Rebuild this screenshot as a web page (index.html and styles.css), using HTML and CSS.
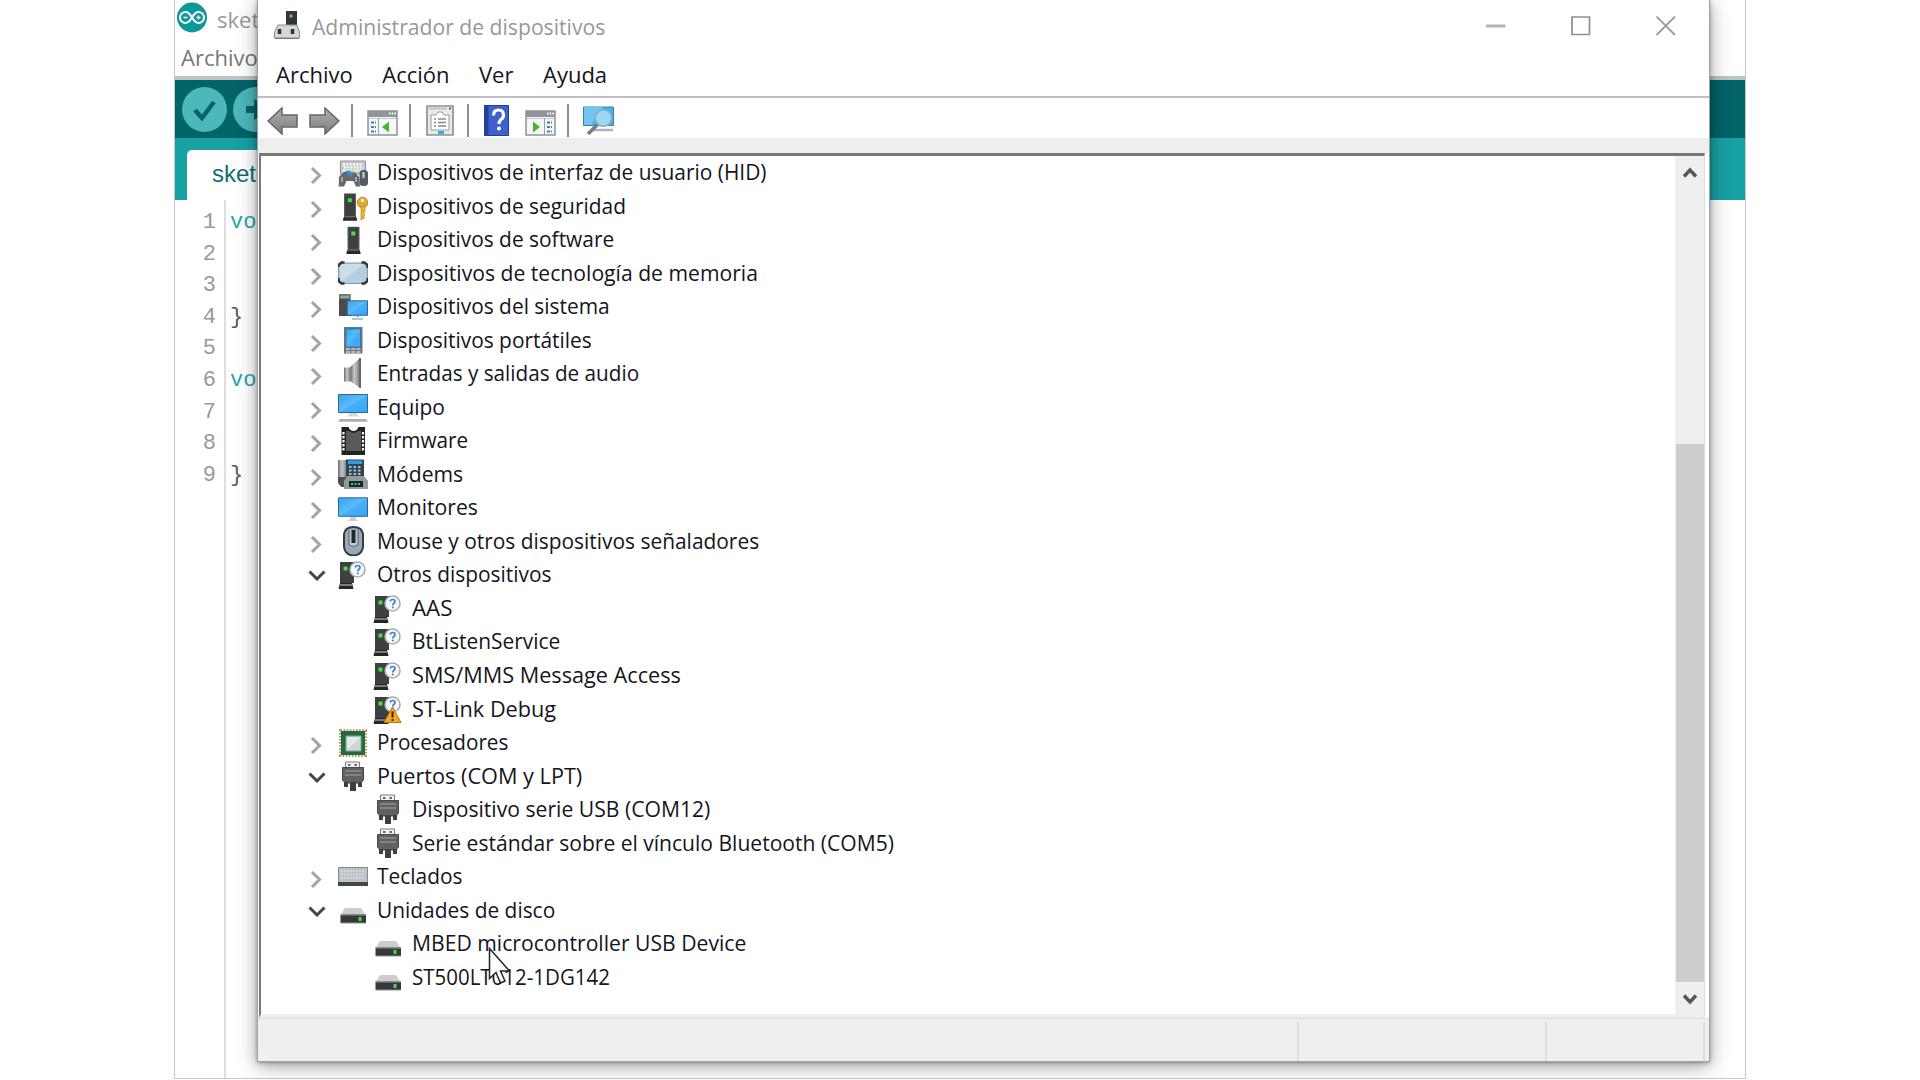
FILE: index.html
```html
<!DOCTYPE html>
<html lang="es">
<head>
<meta charset="utf-8">
<title>Administrador de dispositivos</title>
<link rel="stylesheet" href="styles.css">
</head>
<body>
<svg class="defs" width="0" height="0">
  <defs>
    <linearGradient id="blue" x1="0" y1="0" x2="1" y2="1"><stop offset="0" stop-color="#37a4f2"/><stop offset=".5" stop-color="#5bbcfa"/><stop offset=".52" stop-color="#45affa"/><stop offset="1" stop-color="#3ba5f3"/></linearGradient>
    <linearGradient id="steel" x1="0" y1="0" x2="1" y2="0"><stop offset="0" stop-color="#6d7073"/><stop offset=".5" stop-color="#c5c8ca"/><stop offset="1" stop-color="#85888b"/></linearGradient>
    <linearGradient id="arrow" x1="0" y1="0" x2="0" y2="1"><stop offset="0" stop-color="#b0b0b0"/><stop offset="1" stop-color="#7c7c7c"/></linearGradient>
    <symbol id="right" viewBox="0 0 18 34"><path d="M4 12l7.500 7.500L4 27" fill="none" stroke="#a3a3a3" stroke-width="3"/></symbol>
    <symbol id="down" viewBox="0 0 18 34"><path d="M1.500 13.500l7.500 7.500 7.500-7.500" fill="none" stroke="#444" stroke-width="3"/></symbol>
    <symbol id="hid" viewBox="0 0 30 30"><path d="M2.500 4h25v13h-25z" fill="#c9cdd0" stroke="#8d9296"/><path d="M5 7.500h20M6 10.500h18M5 13.500h20" stroke="#fff" stroke-width="1.800" stroke-dasharray="2 1.300"/><path d="M5 15.500q5-3 12 0l4 4.500 1 9.500h-4l-2.500-5.500h-7L6 29.500H.700L1 20z" fill="#62686c"/><path d="M9 14l5 5M15 15l-5 4" stroke="#169cf0" stroke-width="2.500"/><path d="M13 14h3" stroke="#ffd21f" stroke-width="2.500"/><path d="M10 19h3" stroke="#e73d2d" stroke-width="2"/><path d="M4 20v5M18 20v5" stroke="#b9bdc0" stroke-width="1.500"/><rect x="21.500" y="13" width="8.500" height="16" rx="3.500" fill="#555c62"/><path d="M25.500 15v6" stroke="#d2d5d8" stroke-width="2"/></symbol>
    <symbol id="tower" viewBox="0 0 15 28"><path d="M2 .500h11V22H2z" fill="#3d3f40" stroke="#5c5e5f"/><path d="M2 22h11l1.500 4v1.500H.500V26z" fill="#28292a"/><path d="M2 23.500h11" stroke="#8b8d8e"/><path d="M5.300 5h4v4h-4z" fill="#41e33f"/></symbol>
    <symbol id="security" viewBox="0 0 30 30"><use href="#tower" x="4.500" y="2.300" width="15" height="28"/><circle cx="24.500" cy="11.500" r="5.300" fill="#e3ac30" stroke="#aa7a18" stroke-width=".8"/><path d="M23 15v14l3.500-2-1-2 1.500-1-1.500-2 1.500-1.500V15z" fill="#e8b232" stroke="#b98618" stroke-width=".7"/><circle cx="24.500" cy="9.500" r="1.500" fill="#fff"/></symbol>
    <symbol id="software" viewBox="0 0 30 30"><use href="#tower" x="8" y="2.500" width="15" height="28"/></symbol>
    <symbol id="memory" viewBox="0 0 30 30"><path d="M3 5h24l2.500 3v15L27 25.500H3L.500 23V8z" fill="#b4cfdf" stroke="#8798a4"/><path d="M3 24L26 6H4L2 9z" fill="#c9deea"/><path d="M.500 9V7l3-2.500h3M23.500 4.500h3L29.500 7v3M.500 20v3l3 2.500h3M23.500 25.500h3l3-2.500v-3" fill="none" stroke="#34383b" stroke-width="2.500"/></symbol>
    <symbol id="system" viewBox="0 0 30 30"><path d="M1 3h11.500v22H1z" fill="#494c4e"/><path d="M1 3h11.500v5H1z" fill="#777b7d"/><path d="M3 6h6" stroke="#c9cccd"/><path d="M9 6h2" stroke="#51d653" stroke-width="2"/><path d="M9.200 9.800h20.300v14.500H9.200z" fill="url(#blue)" stroke="#31678d"/><path d="M14 28h11M18 25.500h3" stroke="#a6b1bb" stroke-width="1.500"/></symbol>
    <symbol id="portable" viewBox="0 0 30 30"><path d="M6 2h18.500v26.500H6z" fill="#6f7478"/><path d="M8 4h14.500v18H8z" fill="url(#blue)" stroke="#1e72b4" stroke-width=".7"/><path d="M8 24h14.500M8 27h14.500" stroke="#cfd2d4" stroke-width="1.700" stroke-dasharray="4 1.200"/></symbol>
    <symbol id="audio" viewBox="0 0 30 30"><path d="M6 9.500h6v14H6z" fill="url(#steel)"/><path d="M12 9L21 1v28l-9-6z" fill="url(#steel)"/><path d="M22 0v30" stroke="#62676b" stroke-width="2"/></symbol>
    <symbol id="computer" viewBox="0 0 30 30"><path d="M.500 2.500h29V20.500H.500z" fill="url(#blue)" stroke="#31678d"/><path d="M11 21h8v2l3 1.500H8l3-1.500z" fill="#d2d7db"/><path d="M2 27h26l2 2.700H0z" fill="#a9b0bc"/></symbol>
    <symbol id="monitor" viewBox="0 0 30 30"><path d="M.500 5.800h29v18.500H.500z" fill="url(#blue)" stroke="#31678d"/><path d="M12 25h6v2l3 2H9l3-2z" fill="#cbd2d8"/></symbol>
    <symbol id="firmware" viewBox="0 0 30 30"><path d="M3.500 2h7q1.500 4 5 4t5-4h6.500v28H3.500z" fill="#222"/><path d="M8 6h3q4 4 9 0h3v20H8z" fill="#5a5a5a"/><path d="M5.500 7v20M25 7v20" stroke="#f2f2f2" stroke-width="2.200" stroke-dasharray="2.400 1.600"/></symbol>
    <symbol id="modem" viewBox="0 0 30 30"><path d="M0 1h8v18H0z" fill="url(#steel)"/><path d="M0 18h9v10H3l-3-4z" fill="#4d5052"/><path d="M8 .500h18V19H8z" fill="#394149"/><path d="M10 1.500h14v3.500H10z" fill="#2b9fe8"/><path d="M11 8h12M11 11.500h12M11 15h12" stroke="#8fc4e2" stroke-width="1.800" stroke-dasharray="2.500 2"/><path d="M9 17h17l4 5v8H6v-8z" fill="#94999c"/><path d="M11 22h14v6H11z" fill="#182529"/><path d="M13 25h10" stroke="#22cfa3" stroke-width="2" stroke-dasharray="2 1.500"/></symbol>
    <symbol id="mouse" viewBox="0 0 30 30"><path d="M6 8q1-7 9.500-7T25 8v13q-1 8-9.500 8.500Q7 29 6 21z" fill="#9aa8b4" stroke="#343b42" stroke-width="2"/><path d="M11 4v15q4 3 9 0V4" fill="#c0c9d0" stroke="#59636c"/><path d="M15.500 4v13" stroke="#23282c" stroke-width="4"/></symbol>
    <symbol id="unknown" viewBox="0 0 30 30"><path d="M2 3h14v21H2z" fill="#3d3f40"/><path d="M2 24h12l1.500 6H.500z" fill="#242526"/><path d="M2 26h12" stroke="#9a9a9a" stroke-width="1.500"/><path d="M5.500 7.500h4v4h-4z" fill="#41e33f"/><circle cx="19.500" cy="10.500" r="7.500" fill="#f7f9fb" stroke="#a9adb1" stroke-width="1.600"/><path d="M17.200 8.500q.3-2 2.500-2 2.300 0 2.300 2 0 1-1.300 2-.9.700-.9 2" fill="none" stroke="#3c7fd0" stroke-width="1.700"/><circle cx="19.800" cy="14.600" r="1" fill="#3c7fd0"/></symbol>
    <symbol id="warning" viewBox="0 0 30 30"><use href="#unknown" width="30" height="30"/><path d="M19.500 13l8.500 15.500H11z" fill="#f4a91f" stroke="#b0730e"/><path d="M19.500 17.500v6" stroke="#302410" stroke-width="2"/><path d="M19.500 25v2" stroke="#302410" stroke-width="2"/></symbol>
    <symbol id="cpu" viewBox="0 0 30 30"><path d="M2.500 3.500h25v25h-25z" fill="none" stroke="#b89d4c" stroke-width="3" stroke-dasharray="1.600 1.500"/><path d="M3 4h24v24H3z" fill="#256848"/><path d="M8 9h15v15H8z" fill="#d0d8d5" stroke="#7ea491"/><path d="M9 23V10h13z" fill="#e6e9e7"/></symbol>
    <symbol id="port" viewBox="0 0 30 30"><path d="M7.500 1h14v6h-14z" fill="#f2f2f2" stroke="#7d7d7d"/><path d="M10 4h2.500M16.500 4H19" stroke="#686868" stroke-width="1.800"/><path d="M4.500 6.500h21V19l-2.500 3H7l-2.500-3z" fill="#5f6163" stroke="#46484a"/><path d="M7 10h16M7 14h16" stroke="#808284" stroke-width="2"/><path d="M6 21h4v5H6zM20 21h4v5h-4zM12 21h6v9h-6z" fill="#3e4042"/></symbol>
    <symbol id="keyboard" viewBox="0 0 30 30"><path d="M.500 6.500h29v17.500H.500z" fill="#bdc3c8" stroke="#83898e"/><path d="M3 10h24M3 13.500h24M3 17h24" stroke="#d8dcdf" stroke-width="1.700" stroke-dasharray="2 1"/><path d="M0 21h30v4H0z" fill="#41464b"/></symbol>
    <symbol id="disk" viewBox="0 0 30 30"><path d="M7 13h16l4.500 7h-25z" fill="#cbcdce"/><path d="M2.500 19.500h25.500V28H2.500z" fill="#36383a"/><path d="M2.500 20h25.500M3 28h25" stroke="#8f9193"/><path d="M20.500 22h3v4h-3z" fill="#46db45"/></symbol>
    <symbol id="panel" viewBox="0 0 31 26"><path d="M1 1h29v24H1z" fill="#f7f7f7" stroke="#8d9298" stroke-width="1.500"/><path d="M1 1h29v6H1z" fill="#8e949a"/><path d="M22 3.500h7" stroke="#fff" stroke-width="2" stroke-dasharray="1.500 1.200"/><path d="M2 8.500h27" stroke="#c6c9cc"/></symbol>
  </defs>
</svg>

<main class="stage">
  <section class="ide">
    <header class="ide-title">
      <svg class="ide-logo" viewBox="0 0 30 30"><circle cx="15" cy="15" r="15" fill="#0e979d"/><path d="M15 15C12 10 10.500 9.500 8.500 9.500a5.500 5.500 0 000 11c2 0 3.500-.5 6.500-5.500 3-5 4.500-5.500 6.500-5.500a5.500 5.500 0 010 11c-2 0-3.500-.5-6.500-5.500z" fill="none" stroke="#fff" stroke-width="2"/><path d="M6.500 15h4M19.500 15h4M21.500 13v4" stroke="#fff" stroke-width="1.300"/></svg>
      <span>sket</span>
    </header>
    <nav class="ide-menu"><span>Archivo</span></nav>
    <div class="ide-tools">
      <svg viewBox="0 0 45 45"><circle cx="22.500" cy="22.500" r="22.500" fill="#4db7bb"/><path d="M13 23l7 8L32 15" fill="none" stroke="#006468" stroke-width="4.500"/></svg>
      <svg viewBox="0 0 45 45"><circle cx="22.500" cy="22.500" r="22.500" fill="#4db7bb"/><path d="M13 19h8v-7l14 10.500L21 33v-7h-8z" fill="#006468"/></svg>
    </div>
    <div class="ide-tabs"><span class="ide-tab">sketch</span></div>
    <div class="ide-editor">
      <div class="gutter"><span>1</span><span>2</span><span>3</span><span>4</span><span>5</span><span>6</span><span>7</span><span>8</span><span>9</span></div>
      <div class="code"><span class="kw">vo</span><span></span><span></span><span>}</span><span></span><span class="kw">vo</span><span></span><span></span><span>}</span></div>
    </div>
  </section>

  <section class="window">
    <header class="titlebar">
      <svg class="app-icon" viewBox="0 0 26 30"><path d="M12 1h11v14H12z" fill="#333536"/><path d="M15.500 4.500h3v3h-3z" fill="#46d94a"/><path d="M4 15h19l2.500 7v6H.500v-6z" fill="#d5d7d8" stroke="#8c8f91"/><path d="M5.500 19v5M18.500 19v5" stroke="#303233" stroke-width="3.500"/><path d="M1 28.500h24" stroke="#77797b"/></svg>
      <h1><span class="fit wide">Administrador de dispositivos</span></h1>
      <div class="controls">
        <svg viewBox="0 0 20 20"><path d="M0 10h19.500" stroke="#b5b5b5" stroke-width="3"/></svg>
        <svg viewBox="0 0 20 20"><path d="M1 1h17.500v17.500H1z" fill="none" stroke="#8f8f8f" stroke-width="1.700"/></svg>
        <svg viewBox="0 0 20 20"><path d="M.500.500l18.500 18.500M19 .500L.500 19" stroke="#9b9b9b" stroke-width="1.800"/></svg>
      </div>
    </header>
    <nav class="menubar"><span>Archivo</span><span>Acción</span><span>Ver</span><span>Ayuda</span></nav>
    <div class="toolbar">
      <svg class="t-back" viewBox="0 0 31 28"><path d="M1 14L15 1v7h15v12H15v7z" fill="url(#arrow)" stroke="#666" stroke-width="1.500"/></svg>
      <svg class="t-forward" viewBox="0 0 31 28"><path d="M30 14L16 1v7H1v12h15v7z" fill="url(#arrow)" stroke="#666" stroke-width="1.500"/></svg>
      <i class="sep"></i>
      <svg class="t-panel" viewBox="0 0 31 26"><use href="#panel" width="31" height="26"/><path d="M11.500 8v17" stroke="#9aa0a5"/><path d="M4 12.500h5M4 17h5M4 21.500h5" stroke="#3584c6" stroke-width="2" stroke-dasharray="3 1"/><path d="M22 11.500v11L15 17z" fill="#48b52f"/></svg>
      <i class="sep"></i>
      <svg class="t-props" viewBox="0 0 28 31"><path d="M1 1h26v29H1z" fill="#e8e9ea" stroke="#8e9296" stroke-width="1.700"/><path d="M3 3.500h18" stroke="#bfc2c5" stroke-width="2"/><path d="M23 3.500h2" stroke="#666" stroke-width="2"/><path d="M5 10h5l2-3h4l2 3h5v15H5z" fill="#fff" stroke="#989ca0"/><path d="M8 14h2M8 17.500h2M8 21h2M12 14h8M12 17.500h8M12 21h8" stroke="#838a90" stroke-width="1.300"/><path d="M12 27.500h6" stroke="#35aee2" stroke-width="3"/></svg>
      <i class="sep"></i>
      <svg class="t-help" viewBox="0 0 25 31"><path d="M.500.500h24v30H.500z" fill="#3e5fcc" stroke="#253d91"/><path d="M.500.500h4v30h-4z" fill="#263f9d"/><path d="M9.500 10.500Q9.500 5 14.500 5T19.500 10q0 3-2.500 4.500-2 1.500-2 4.500" fill="none" stroke="#fff" stroke-width="3.200"/><circle cx="15" cy="23.500" r="2" fill="#fff"/></svg>
      <svg class="t-panel2" viewBox="0 0 31 26"><use href="#panel" width="31" height="26"/><path d="M19.500 8v17" stroke="#9aa0a5"/><path d="M22 12.500h5M22 17h5M22 21.500h5" stroke="#3584c6" stroke-width="2" stroke-dasharray="3 1"/><path d="M8 11.500v11l7-5.500z" fill="#48b52f"/></svg>
      <i class="sep"></i>
      <svg class="t-scan" viewBox="0 0 31 29"><path d="M.500 1h30v18.500H.500z" fill="#4bb0e7" stroke="#3981ad"/><path d="M1 1h19L8 19H1z" fill="#71c5ef"/><path d="M9 24h21" stroke="#a9b4bd" stroke-width="2.500"/><path d="M15 18L5 28" stroke="#6f7e89" stroke-width="3.500"/><circle cx="20.500" cy="12" r="8.300" fill="#9bd6f3" stroke="#88adc1" stroke-width="1.500"/></svg>
    </div>
    <div class="gap"></div>
    <div class="pane">
      <ul class="tree">
        <li><svg class="tw"><use href="#right"/></svg><svg class="ic"><use href="#hid"/></svg><span class="fit">Dispositivos de interfaz de usuario (HID)</span></li>
        <li><svg class="tw"><use href="#right"/></svg><svg class="ic"><use href="#security"/></svg><span class="fit">Dispositivos de seguridad</span></li>
        <li><svg class="tw"><use href="#right"/></svg><svg class="ic"><use href="#software"/></svg><span class="fit">Dispositivos de software</span></li>
        <li><svg class="tw"><use href="#right"/></svg><svg class="ic"><use href="#memory"/></svg><span class="fit wide">Dispositivos de tecnología de memoria</span></li>
        <li><svg class="tw"><use href="#right"/></svg><svg class="ic"><use href="#system"/></svg><span class="fit">Dispositivos del sistema</span></li>
        <li><svg class="tw"><use href="#right"/></svg><svg class="ic"><use href="#portable"/></svg><span class="fit">Dispositivos portátiles</span></li>
        <li><svg class="tw"><use href="#right"/></svg><svg class="ic"><use href="#audio"/></svg><span class="fit snug">Entradas y salidas de audio</span></li>
        <li><svg class="tw"><use href="#right"/></svg><svg class="ic"><use href="#computer"/></svg><span class="fit">Equipo</span></li>
        <li><svg class="tw"><use href="#right"/></svg><svg class="ic"><use href="#firmware"/></svg><span class="fit snug">Firmware</span></li>
        <li><svg class="tw"><use href="#right"/></svg><svg class="ic"><use href="#modem"/></svg><span class="fit wide">Módems</span></li>
        <li><svg class="tw"><use href="#right"/></svg><svg class="ic"><use href="#monitor"/></svg><span class="fit wide">Monitores</span></li>
        <li><svg class="tw"><use href="#right"/></svg><svg class="ic"><use href="#mouse"/></svg><span class="fit">Mouse y otros dispositivos señaladores</span></li>
        <li><svg class="tw"><use href="#down"/></svg><svg class="ic"><use href="#unknown"/></svg><span class="fit">Otros dispositivos</span></li>
        <li class="child"><svg class="ic"><use href="#unknown"/></svg><span class="fit full">AAS</span></li>
        <li class="child"><svg class="ic"><use href="#unknown"/></svg><span class="fit">BtListenService</span></li>
        <li class="child"><svg class="ic"><use href="#unknown"/></svg><span class="fit wider">SMS/MMS Message Access</span></li>
        <li class="child"><svg class="ic"><use href="#warning"/></svg><span class="fit wider">ST-Link Debug</span></li>
        <li><svg class="tw"><use href="#right"/></svg><svg class="ic"><use href="#cpu"/></svg><span class="fit snug">Procesadores</span></li>
        <li><svg class="tw"><use href="#down"/></svg><svg class="ic"><use href="#port"/></svg><span class="fit wider">Puertos (COM y LPT)</span></li>
        <li class="child"><svg class="ic"><use href="#port"/></svg><span class="fit wide">Dispositivo serie USB (COM12)</span></li>
        <li class="child"><svg class="ic"><use href="#port"/></svg><span class="fit mid">Serie estándar sobre el vínculo Bluetooth (COM5)</span></li>
        <li><svg class="tw"><use href="#right"/></svg><svg class="ic"><use href="#keyboard"/></svg><span class="fit">Teclados</span></li>
        <li><svg class="tw"><use href="#down"/></svg><svg class="ic"><use href="#disk"/></svg><span class="fit">Unidades de disco</span></li>
        <li class="child"><svg class="ic"><use href="#disk"/></svg><span class="fit wide">MBED microcontroller USB Device</span></li>
        <li class="child"><svg class="ic"><use href="#disk"/></svg><span class="fit narrow">ST500LT012-1DG142</span></li>
      </ul>
      <div class="scrollbar">
        <svg viewBox="0 0 14 12"><path d="M1 10.500L7 4l6 6.500" fill="none" stroke="#555" stroke-width="3.500"/></svg>
        <div class="thumb"></div>
        <svg viewBox="0 0 14 12"><path d="M1 1.500L7 8l6-6.500" fill="none" stroke="#555" stroke-width="3.500"/></svg>
      </div>
    </div>
    <footer class="status"><span></span><span></span><span></span></footer>
  </section>
  <svg class="cursor" viewBox="0 0 24 38"><path d="M1.500 1.500v30l6.500-6 4.500 10.500 4.500-2-4.500-10h9z" fill="#fff" stroke="#222" stroke-width="1.500"/></svg>
</main>
</body>
</html>
```
FILE: styles.css
```css
* { box-sizing: border-box; }
body { margin: 0; background: #fff; font-family: "Open Sans", "Noto Sans", sans-serif; font-size: 22px; color: #15151c; }
svg { display: block; flex: none; }
.defs { position: absolute; }
.stage { position: relative; width: 1920px; height: 1080px; overflow: hidden; }

/* editor window behind */
.ide { width: 1572px; height: 1079px; margin-left: 174px; border: 1px solid #c8c8c8; border-top: 0; background: #fff; display: flex; flex-direction: column; }
.ide-title { height: 37px; padding: 2px 0 0 2px; display: flex; gap: 10px; color: #999; line-height: 34px; }
.ide-logo { width: 30px; height: 31px; }
.ide-menu { height: 43px; padding-left: 6px; line-height: 40px; color: #777; border-bottom: 4px solid #c0c3c4; }
.ide-tools { height: 58px; background: #006468; padding: 7px 0 0 7px; display: flex; gap: 6px; }
.ide-tools svg { width: 45px; height: 45px; }
.ide-tabs { height: 62px; background: #17a1a5; padding: 12px 0 0 12px; }
.ide-tab { display: block; width: 110px; height: 50px; padding-left: 25px; border-radius: 5px 0 0 0; background: #fff; color: #106f70; font: 24px/47px "Liberation Sans", sans-serif; }
.ide-editor { flex: 1; display: flex; font: 22px/31.6px "Liberation Mono", monospace; }
.ide-editor span { display: block; height: 31.6px; }
.gutter { width: 51px; padding: 7px 8px 0 0; text-align: right; color: #999; border-right: 2px solid #dedede; }
.code { padding: 7px 0 0 4px; color: #555; }
.kw { color: #2ba5a9; }

/* device manager window */
.window { position: absolute; left: 257px; top: 0; width: 1453px; height: 1062px; background: #fff; border: 1px solid #a2a2a2; border-top: 0; box-shadow: 0 4px 18px rgba(0,0,0,.38), 0 1px 4px rgba(0,0,0,.3); display: flex; flex-direction: column; }
.titlebar { height: 53px; padding: 10px 33px 0 16px; display: flex; }
.app-icon { width: 26px; height: 30px; }
.titlebar h1 { flex: 1; margin: 0 0 0 12px; font-size: 22px; font-weight: 400; line-height: 32px; color: #989898; }
.controls { display: flex; gap: 65px; padding-top: 6px; }
.controls svg { width: 20px; height: 20px; }

/* labels set slightly condensed */
.fit { display: inline-block; white-space: nowrap; transform: scaleX(.95); transform-origin: 0 50%; }
.fit.narrow { transform: scaleX(.931); }
.fit.snug { transform: scaleX(.941); }
.fit.mid { transform: scaleX(.957); }
.fit.wide { transform: scaleX(.961); }
.fit.wider { transform: scaleX(.985); }
.fit.full { transform: scaleX(1.015); }

.menubar { height: 45px; padding-left: 18px; border-bottom: 2px solid #bfbfbf; display: flex; gap: 29.500px; line-height: 42px; }
.toolbar { height: 40px; padding-left: 9px; display: flex; }
.sep { width: 2px; height: 33px; margin-top: 6px; background: #8e8e8e; }
.t-back { width: 31px; height: 28px; margin-top: 9px; }
.t-forward { width: 31px; height: 28px; margin: 9px 11px 0 11px; }
.t-panel { width: 31px; height: 26px; margin: 12px 11px 0 14px; }
.t-props { width: 28px; height: 31px; margin: 7px 13px 0 15px; }
.t-help { width: 25px; height: 31px; margin: 7px 16px 0 15px; }
.t-panel2 { width: 31px; height: 26px; margin: 12px 11px 0 0; }
.t-scan { width: 31px; height: 29px; margin: 8px 0 0 14px; }
.gap { height: 15px; background: #eee; }
.pane { height: 865px; margin: 0 4px 0 1px; border-top: 3px solid #777; border-left: 2px solid #777; border-bottom: 4px solid #eee; border-right: 1px solid #ddd; display: flex; }
.tree { flex: 1; list-style: none; margin: 0; padding: 0 0 0 47px; }
.tree li { height: 33.54px; display: flex; line-height: 30px; }
.tree .child { padding-left: 65px; }
.tw { width: 18px; height: 34px; margin-right: 12px; }
.ic { width: 30px; height: 30px; margin: 1px 9px 0 0; }
.scrollbar { width: 29px; background: #efefef; display: flex; flex-direction: column; align-items: center; padding: 10px 0 8px; }
.scrollbar svg { width: 14px; height: 12px; }
.thumb { width: 28px; height: 538px; margin: auto 0 12px; background: #cdcdcd; }
.status { flex: 1; border-top: 1px solid #ddd; background: #efefef; display: grid; grid-template-columns: 1041px 248px 158px; padding-top: 3px; }
.status span { border-right: 2px solid #dcdcdc; }

.cursor { position: absolute; left: 488px; top: 947px; width: 24px; height: 38px; }
```
